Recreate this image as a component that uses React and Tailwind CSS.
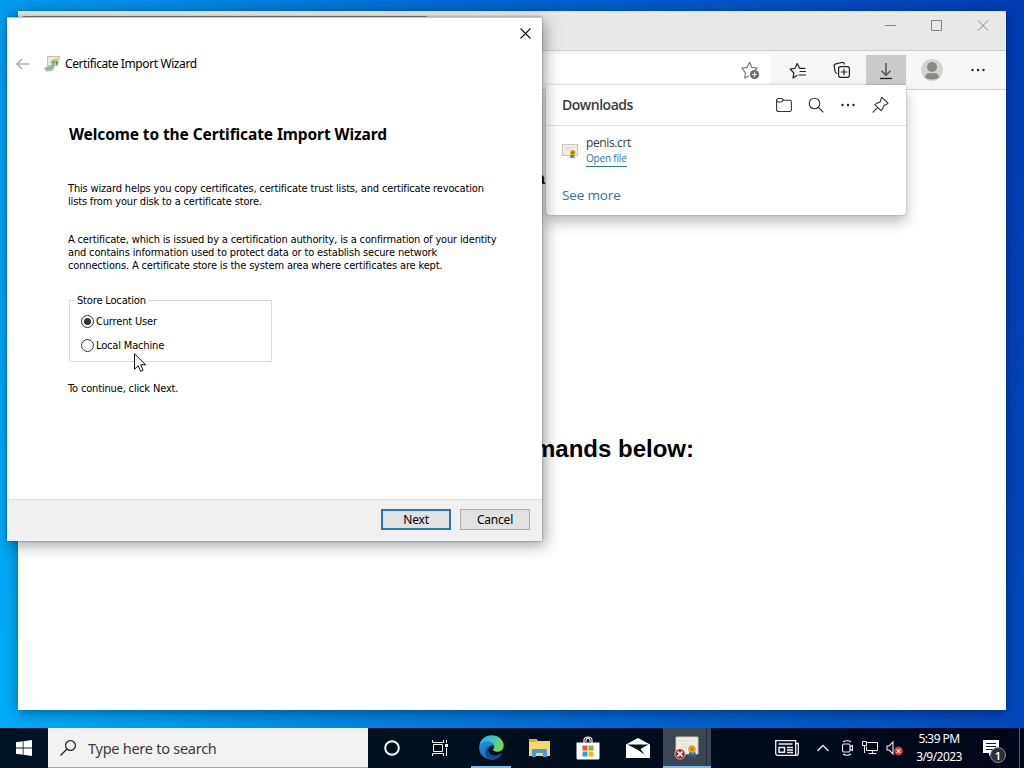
import React, { useState } from 'react';

function WindowControls() {
  return (
    <div className="flex text-[#858585]">
      <svg width="138" height="30" viewBox="0 0 138 30" fill="none" stroke="currentColor" strokeWidth="1">
        <path d="M17 14.500H28M63.500 9.500h10v10h-10zM110 9.500l10 10M120 9.500l-10 10" />
      </svg>
    </div>
  );
}

function StarAdd() {
  return (
    <svg width="20" height="20" viewBox="0 0 20 20" fill="none" stroke="#777" strokeWidth="1.2" strokeLinejoin="round">
      <path d="M8.200 15.800l-4.500 2.200.800-5.200L.800 8l5.200-.600L8.500 2.200 10.900 7.400l5.300.600-1.900 2" />
      <circle cx="13.500" cy="14.500" r="4.600" fill="#6b6b6b" stroke="none" />
      <path d="M13.500 12.200v4.600M11.200 14.500h4.600" stroke="#fff" />
    </svg>
  );
}

function Favorites() {
  return (
    <svg width="18" height="18" viewBox="0 0 18 18" fill="none" stroke="#222" strokeWidth="1.200" strokeLinejoin="round" strokeLinecap="round">
      <path d="M8 13.500L4 16l.800-5L1.200 7l4.800-.700L8.200 1.500l2.300 4.800h5.500M11 9.500h5.500M10 13h6.500" />
    </svg>
  );
}

function Collections() {
  return (
    <svg width="18" height="18" viewBox="0 0 18 18" fill="none" stroke="#222" strokeWidth="1.200" strokeLinejoin="round" strokeLinecap="round">
      <path d="M4 12.500c-1.200-.300-1.700-1-1.900-2L1.200 5.200c-.200-1.300.400-2.100 1.600-2.400L9 1.500c1.200-.200 2 .300 2.500 1.500" />
      <rect x="5.600" y="5.600" width="10.800" height="10.800" rx="2.200" />
      <path d="M11 8.200v5.600M8.200 11h5.600" />
    </svg>
  );
}

function Dots() {
  return (
    <svg width="16" height="16" viewBox="0 0 16 16" fill="#222">
      <circle cx="2.500" cy="8" r="1.200" />
      <circle cx="8" cy="8" r="1.200" />
      <circle cx="13.500" cy="8" r="1.200" />
    </svg>
  );
}

function CertIcon({ className }) {
  return (
    <svg className={className} viewBox="0 0 16 16">
      <rect x=".5" y="1.500" width="15" height="11" fill="#f1efe4" stroke="#c9c8bd" />
      <path d="M3 4.500h9M3 6.500h6" stroke="#d3d3c8" strokeWidth=".7" />
      <path d="M9 11l-1 4.500 2-1 1 .5V11zM11.500 11l1.500 4.300-1.700-.600V11z" fill="#386b92" />
      <circle cx="10.800" cy="9.700" r="2.700" fill="#d9a21d" />
      <circle cx="10.800" cy="9.500" r="1.200" fill="#9c7218" />
    </svg>
  );
}

function DownloadsPopup() {
  return (
    <div className="absolute left-[528px] top-[74px] w-[360px] h-[130px] rounded-b-[4px] bg-white shadow-[0_7px_14px_rgba(0,0,0,0.27),0_0_2px_rgba(0,0,0,0.3)] font-['Open_Sans','Noto_Sans',sans-serif]">
      <div className="flex h-[41px] items-center border-b border-[#e1e1e1] pl-4 pr-[17px]">
        <h2 className="grow text-[14px] font-semibold leading-none tracking-[-0.48px] text-[#3b3b3b]">Downloads</h2>
        <div className="flex items-center gap-4">
          <svg width="16" height="16" viewBox="0 0 16 16" fill="none" stroke="#333" strokeWidth="1.100" strokeLinejoin="round">
            <path d="M.600 3.200c0-1 .600-1.700 1.700-1.700h2.900c.600 0 1 .200 1.300.600l.900 1.100h6.200c1.100 0 1.800.700 1.800 1.800v7.700c0 1.100-.700 1.800-1.800 1.800H2.400c-1.100 0-1.800-.700-1.800-1.800z" />
            <path d="M.600 3.200c0 1 .600 1.800 1.700 1.800h2.400c.500 0 .900-.200 1.300-.600l1.200-1.200" />
          </svg>
          <svg width="16" height="16" viewBox="0 0 16 16" fill="none" stroke="#333" strokeWidth="1.100" strokeLinecap="round">
            <circle cx="6.500" cy="6.500" r="5.300" />
            <path d="M10.400 10.400l4.600 4.600" />
          </svg>
          <Dots />
          <svg width="17" height="16" viewBox="0 0 17 16" fill="none" stroke="#333" strokeWidth="1.100" strokeLinejoin="round" strokeLinecap="round">
            <path d="M9.800.300l6.200 5.900-1.200 1-2.500 1-2 4-1.200 1.400L2.800 7.600l1.600-1 4-1.900.700-3zM5.700 10.700L1 15.200" />
          </svg>
        </div>
      </div>
      <div className="flex items-start gap-2 pl-4 pt-2">
        <CertIcon className="mt-[9px] h-4 w-4" />
        <div className="flex flex-col items-start">
          <span className="text-[12px] leading-[18px] tracking-[-0.38px] text-[#3b3b3b]">penis.crt</span>
          <a className="border-b border-[#2f7ab5] text-[10px] leading-[13px] tracking-[-0.18px] text-[#2874b1] pb-px">Open file</a>
        </div>
      </div>
      <a className="ml-4 mt-[18px] block text-[13.500px] leading-5 tracking-[-0.15px] text-[#336f9f]">See more</a>
    </div>
  );
}

function Browser() {
  return (
    <div className="absolute left-[18px] top-[11px] flex h-[699px] w-[988px] flex-col bg-white shadow-[0_3px_12px_rgba(0,0,0,0.4)]">
      <div className="flex h-10 shrink-0 justify-between border-b border-[#cfcfcf] bg-[#e8e8e8]">
        <div className="mt-[5px] ml-[5px] h-[35px] w-[406px] rounded-tr border-t border-[#888] bg-[#d0d0d0]" />
        <WindowControls />
      </div>
      <div className="flex h-[39px] shrink-0 border-b border-[#cfcfcf] bg-[#f7f7f7]">
        <div className="mt-[3px] flex h-[35px] w-[752px] items-start justify-end bg-white pr-[9px] pt-[6px]">
          <StarAdd />
        </div>
        <div className="ml-[19px] mt-[11px]"><Favorites /></div>
        <div className="ml-[26px] mt-[10px]"><Collections /></div>
        <div className="ml-[15px] mt-1 flex h-[31px] w-10 items-center justify-center bg-[#cbcbcb]">
          <svg width="14" height="18" viewBox="0 0 14 18" fill="none">
            <path d="M7 1v12M2.500 8.800L7 13.300l4.500-4.500" stroke="#555" strokeWidth="1.500" />
            <path d="M1 16.500h12" stroke="#222" strokeWidth="1.300" />
          </svg>
        </div>
        <div className="ml-[15px] mt-2 h-[22px] w-[22px] overflow-hidden rounded-full bg-[#d5d3d0]">
          <svg width="22" height="22" viewBox="0 0 22 22" fill="#8b8986">
            <circle cx="11" cy="8" r="5" />
            <path d="M4 18.500c0-3 2-4.300 4-4.300h6c2 0 4 1.300 4 4.300-2 2.500-12 2.500-14 0z" />
          </svg>
        </div>
        <div className="ml-[27px] mt-[11px]"><Dots /></div>
      </div>
      <div className="flex flex-col pl-[516px] pt-[80px] font-['Liberation_Sans',Arial,sans-serif] font-bold text-black">
        <p className="pl-[2px] text-[16px] leading-[18px]">a</p>
        <h2 className="mt-[247px] w-[160px] whitespace-nowrap text-right text-[24px] leading-[28px]">mands below:</h2>
      </div>
      <DownloadsPopup />
    </div>
  );
}

function Radio({ label, checked, onChange }) {
  return (
    <label className="flex h-[14px] items-center gap-[2px]">
      <input type="radio" name="store" className="sr-only" checked={checked} onChange={onChange} />
      <span className="flex h-[13px] w-[13px] items-center justify-center rounded-full border border-[#333] bg-white">
        {checked && <span className="h-[7px] w-[7px] rounded-full bg-[#333]" />}
      </span>
      <span>{label}</span>
    </label>
  );
}

function Wizard() {
  const [store, setStore] = useState('user');

  return (
    <div className="absolute left-[7px] top-[17px] flex h-[524px] w-[535px] flex-col border-t border-[#c4c4c4] bg-white text-black shadow-[3px_4px_14px_rgba(0,0,0,0.38),0_0_2px_rgba(0,0,0,0.4)]">
      <div className="flex h-[31px] justify-end pr-[11px] pt-[10px]">
        <svg width="11" height="11" viewBox="0 0 11 11" stroke="#111" strokeWidth="1.100">
          <path d="M.500.500l10 10M10.500.500l-10 10" />
        </svg>
      </div>
      <div className="flex h-[30px] items-center pl-[9px] font-['Noto_Sans','Open_Sans',sans-serif] text-[12px]">
        <svg width="13" height="12" viewBox="0 0 13 12" fill="none" stroke="#b4b4b4" strokeWidth="1.600">
          <path d="M6 1L1 6l5 5M1 6h12" />
        </svg>
        <svg className="ml-[15px]" width="16" height="16" viewBox="0 0 16 16">
          <path d="M3.500.500h12l-2 9h-10z" fill="#f2ead3" stroke="#cbbfa0" />
          <path d="M10 3l4-1-1 6-3 1z" fill="#dbc47d" />
          <path d="M12 5l2 1-1 4-1-2z" fill="#65839a" />
          <path d="M0 12l4-2 7 1-3 4-6 .500z" fill="#adb8b4" />
          <path d="M3 12c4 0 5-2 5-5H6l3.500-4L12 7h-1.500c0 4-2 6-7.500 6z" fill="#7ab686" />
        </svg>
        <span className="ml-[5px] tracking-[-0.4px]">Certificate Import Wizard</span>
      </div>
      <div className="flex grow flex-col items-start pl-[62px] pt-[43px] font-['DejaVu_Sans_Condensed','DejaVu_Sans',sans-serif] text-[11px] font-stretch-condensed leading-[13px] tracking-[-0.16px] whitespace-nowrap">
        <h1 className="font-['Noto_Sans','Open_Sans',sans-serif] text-[15.500px] font-bold leading-[24px] tracking-[-0.1px] font-stretch-normal">Welcome to the Certificate Import Wizard</h1>
        <p className="mt-[36px] -ml-px">
          This wizard helps you copy certificates, certificate trust lists, and certificate revocation<br />
          lists from your disk to a certificate store.
        </p>
        <p className="mt-[25px] -ml-px">
          A certificate, which is issued by a certification authority, is a confirmation of your identity<br />
          and contains information used to protect data or to establish secure network<br />
          connections. A certificate store is the system area where certificates are kept.
        </p>
        <fieldset className="mt-[22px] h-[68px] w-[203px] border border-[#dcdcdc] pl-[11px]">
          <legend className="-ml-[6px] px-[2px]">Store Location</legend>
          <div className="flex flex-col gap-[10px] pt-[7px]">
            <Radio label="Current User" checked={store === 'user'} onChange={() => setStore('user')} />
            <Radio label="Local Machine" checked={store === 'machine'} onChange={() => setStore('machine')} />
          </div>
        </fieldset>
        <p className="mt-[20px] -ml-px">To continue, click Next.</p>
      </div>
      <div className="flex h-[42px] shrink-0 justify-end gap-[9px] border-t border-[#dfdfdf] bg-[#f0f0f0] pr-3 pt-[9px] font-['Noto_Sans','Open_Sans',sans-serif] text-[12px] tracking-[-0.2px]">
        <button className="h-[21px] w-[70px] border-2 border-[#2b76ab] bg-[#e1e1e1] leading-none">Next</button>
        <button className="h-[21px] w-[70px] border border-[#adadad] bg-[#e1e1e1] leading-none">Cancel</button>
      </div>
    </div>
  );
}

function Cursor() {
  return (
    <svg className="absolute left-[134px] top-[353px]" width="13" height="20" viewBox="0 0 13 20">
      <path d="M.500.800v15.400l3.700-3.500 2.400 5.700 2.500-1.100-2.400-5.500h5z" fill="#fff" stroke="#111" />
    </svg>
  );
}

function EdgeLogo() {
  return (
    <svg width="25" height="25" viewBox="0 0 24 24">
      <defs>
        <linearGradient id="edgeTop" x1="0" y1="0" x2="1" y2=".3">
          <stop offset="0" stopColor="#2aa9df" />
          <stop offset=".5" stopColor="#34c3c9" />
          <stop offset="1" stopColor="#72d957" />
        </linearGradient>
        <linearGradient id="edgeSide" x1="0" y1="0" x2=".5" y2="1">
          <stop offset="0" stopColor="#1b9de2" />
          <stop offset="1" stopColor="#1566bd" />
        </linearGradient>
      </defs>
      <path d="M.300 10.500C1 4.500 6 .300 12 .300c7 0 11.700 4.800 11.700 9.800 0 3.900-2.800 6-6 6-3 0-4.200-1.100-4.200-1.900 0-.7 1-1.100 1-2.900 0-2.400-2.300-4.300-5.500-4.300-3.700 0-7.500 1.600-8.700 3.500z" fill="url(#edgeTop)" />
      <path d="M.300 11C1.500 7.500 5 5.500 8.500 6c3.300.300 5.500 2.500 5.900 4.500-1-1-4.800-.7-5.600 3-.8 4.500 3 8.300 5.500 9.900C6 25-.8 18.500.300 11z" fill="url(#edgeSide)" />
      <path d="M9.500 10.500c-2 4.300.5 9.500 6 9.200 2.500-.1 4.500-1.100 6.300-2.200.5-.3.900.1.600.5-2 3.500-5.400 5.800-9.400 5.800-5-.3-7.300-4.800-6.800-8.300.3-2.500 1.600-4 3.300-5z" fill="#124b95" />
    </svg>
  );
}

function FolderIcon() {
  return (
    <svg width="23" height="20" viewBox="0 0 23 20">
      <path d="M1 2h8l1.500 1H22v15H1z" fill="#f8d66f" />
      <path d="M1 1h8v3H1z" fill="#eaa82c" />
      <path d="M4 19v-6.500c0-1 .5-1.500 1.500-1.500h12c1 0 1.500.5 1.500 1.500V19h-4v-4H8v4z" fill="#4a9ad2" />
    </svg>
  );
}

function StoreIcon() {
  return (
    <svg width="24" height="24" viewBox="0 0 24 24">
      <path d="M8 7V4c0-4 8-4 8 0v3M10 6V4.500c0-3 4-3 4 0V6" fill="none" stroke="#fff" strokeWidth="1.100" />
      <path d="M.500 6.500h23V22c0 .800-.5 1.500-1.500 1.500H2C1 23.500.500 23 .500 22z" fill="#fff" />
      <path d="M6.500 9.500h5v5h-5z" fill="#e8532b" />
      <path d="M12.500 9.500h5v5h-5z" fill="#7eb62c" />
      <path d="M6.500 15.500h5v5h-5z" fill="#2d9ddb" />
      <path d="M12.500 15.500h5v5h-5z" fill="#f3b41b" />
    </svg>
  );
}

function Taskbar() {
  return (
    <div className="absolute bottom-0 left-0 flex h-10 w-full bg-linear-to-r from-[#001423] via-[#000f1e] to-[#000719] font-['Noto_Sans','Open_Sans',sans-serif] text-white">
      <div className="flex w-12 items-center justify-center">
        <svg width="16" height="16" viewBox="0 0 16 16" fill="#fff">
          <path d="M0 2.300L6.700 1.300v6.300H0zM7.500 1.200L16 0v7.600H7.500zM0 8.400h6.700v6.400L0 13.800zM7.500 8.400H16V16l-8.500-1.200z" />
        </svg>
      </div>
      <div className="flex w-80 items-center gap-3 border-b border-[#aaa] bg-[#f2f2f2] pl-3">
        <svg width="16" height="16" viewBox="0 0 16 16" fill="none" stroke="#222" strokeWidth="1.200">
          <circle cx="10.500" cy="5.500" r="4.900" />
          <path d="M7 9L.500 15.500" />
        </svg>
        <span className="pt-px text-[14.500px] leading-none tracking-[-0.26px] text-[#3b3b3b]">Type here to search</span>
      </div>
      <div className="flex w-12 items-center justify-center">
        <svg width="16" height="16" viewBox="0 0 16 16" fill="none" stroke="#f5f5f5" strokeWidth="2">
          <circle cx="8" cy="8" r="6.800" />
        </svg>
      </div>
      <div className="flex w-12 items-center justify-center">
        <svg width="17" height="16" viewBox="0 0 17 16" fill="none" stroke="#f5f5f5" strokeWidth="1">
          <path d="M.500 0v2.500h11V0M.500 16v-2.500h11V16M1.500 4.500h9v7h-9zM14.500 0v3M14.500 8v8" />
          <path d="M13 4h3v3h-3z" fill="#fff" stroke="none" />
        </svg>
      </div>
      <div className="ml-[7px] flex w-10 items-center justify-center border-b-2 border-[#76b9ed]">
        <EdgeLogo />
      </div>
      <div className="ml-[8px] flex w-10 items-center justify-center"><FolderIcon /></div>
      <div className="ml-[9px] flex w-10 items-center justify-center"><StoreIcon /></div>
      <div className="ml-[10px] flex w-10 items-center justify-center">
        <svg width="24" height="20" viewBox="0 0 24 20">
          <path d="M0 6.500L12 0l12 6.500V20H0z" fill="#fff" />
          <path d="M1.500 6.500h21L14.500 11l4 5.500-6.500-4.500z" fill="#06111d" />
        </svg>
      </div>
      <div className="ml-[5px] flex w-12 border-b-2 border-[#76b9ed] bg-[#3b4651]">
        <div className="flex w-[44px] items-center justify-center border-r border-[#222d38]">
          <svg className="ml-1" width="26" height="25" viewBox="0 0 26 25">
            <path d="M2 2h22v17H2z" fill="#f0eee2" stroke="#c6c8b8" />
            <path d="M5 6h16M7 9h8M7 12h6" stroke="#d6d6c8" />
            <path d="M16 15l-2 7 3-1 1 2 1-7 1 7 2-1-1-7z" fill="#2766a4" />
            <circle cx="18" cy="14" r="3.800" fill="#dfa51d" />
            <circle cx="18" cy="14" r="1.800" fill="#b57e15" />
            <circle cx="6" cy="19" r="5.200" fill="#a12c36" stroke="#ddd" strokeWidth=".7" />
            <path d="M3.500 16.500l5 5M8.500 16.500l-5 5" stroke="#fff" strokeWidth="1.700" />
          </svg>
        </div>
      </div>
      <div className="ml-[64px] flex items-center">
        <svg width="24" height="16" viewBox="0 0 24 16" fill="none" stroke="#eee" strokeWidth="1.300">
          <path d="M.700.700h20v14.600h-18c-1.300 0-2-.700-2-2zM20.700 3.500h2.600v9.800c0 1.300-.8 2-2 2h-2M3.500 4h14M12 7.500h6M12 10h6M12 12.500h6" />
          <path d="M4 7.500h5.500v4.800H4z" strokeWidth="1.500" />
        </svg>
        <svg className="ml-[18px]" width="12" height="8" viewBox="0 0 12 8" fill="none" stroke="#eee" strokeWidth="1.300">
          <path d="M.500 7L6 1.500 11.500 7" />
        </svg>
        <svg className="ml-[12px]" width="13" height="16" viewBox="0 0 13 16" fill="none" stroke="#eee" strokeWidth="1.100">
          <path d="M2 2c2-1.700 6-1.700 8 0M2 14c2 1.700 6 1.700 8 0M3 4h4.500c1 0 1.500.5 1.500 1.500v5c0 1-.5 1.500-1.500 1.500H3c-1 0-1.500-.5-1.500-1.500v-5C1.500 4.500 2 4 3 4zM9 7l2.500-1.500v5L9 9" />
        </svg>
        <svg className="ml-[8px]" width="17" height="16" viewBox="0 0 17 16" fill="none" stroke="#eee" strokeWidth="1">
          <path d="M5.500 2.500h10v8H4.500v-4M10.500 10.500v3M6.500 13.500h8M.500 1.500h4v4h-4zM2.500 5.500V13" />
        </svg>
        <svg className="ml-[7px]" width="18" height="16" viewBox="0 0 18 16" fill="none">
          <path d="M1 6h2l4-4v12L3 10H1z" stroke="#eee" strokeWidth="1.100" />
          <circle cx="12.500" cy="11" r="4.400" fill="#d33a3f" />
          <path d="M10.700 9.200l3.600 3.600M14.300 9.200l-3.600 3.600" stroke="#fff" strokeWidth="1.100" />
        </svg>
      </div>
      <div className="ml-2 flex w-[54px] flex-col items-center pt-[2px] text-[12px] leading-[18px] tracking-[-0.55px]">
        <span className="whitespace-nowrap">5:39 PM</span>
        <span className="whitespace-nowrap">3/9/2023</span>
      </div>
      <div className="relative ml-4 w-[38px] border-r border-[#56606e]">
        <svg className="ml-px mt-3" width="17" height="17" viewBox="0 0 17 17">
          <path d="M0 0h16v13H9l-3 3v-3H0z" fill="#fff" />
          <path d="M3 3.500h10M3 6.500h10M3 9.500h7" stroke="#111a28" />
        </svg>
        <span className="absolute left-[8px] top-[19px] flex h-4 w-4 items-center justify-center rounded-full border border-[#8b8f96] bg-[#2b3038] text-[11px] font-semibold leading-none">1</span>
      </div>
    </div>
  );
}

export default function App() {
  return (
    <div className="relative h-[768px] w-[1024px] overflow-hidden bg-linear-[78deg] from-[#00adfa] via-[#006ad6] to-[#003bb4]">
      <Browser />
      <Wizard />
      <Cursor />
      <Taskbar />
    </div>
  );
}
